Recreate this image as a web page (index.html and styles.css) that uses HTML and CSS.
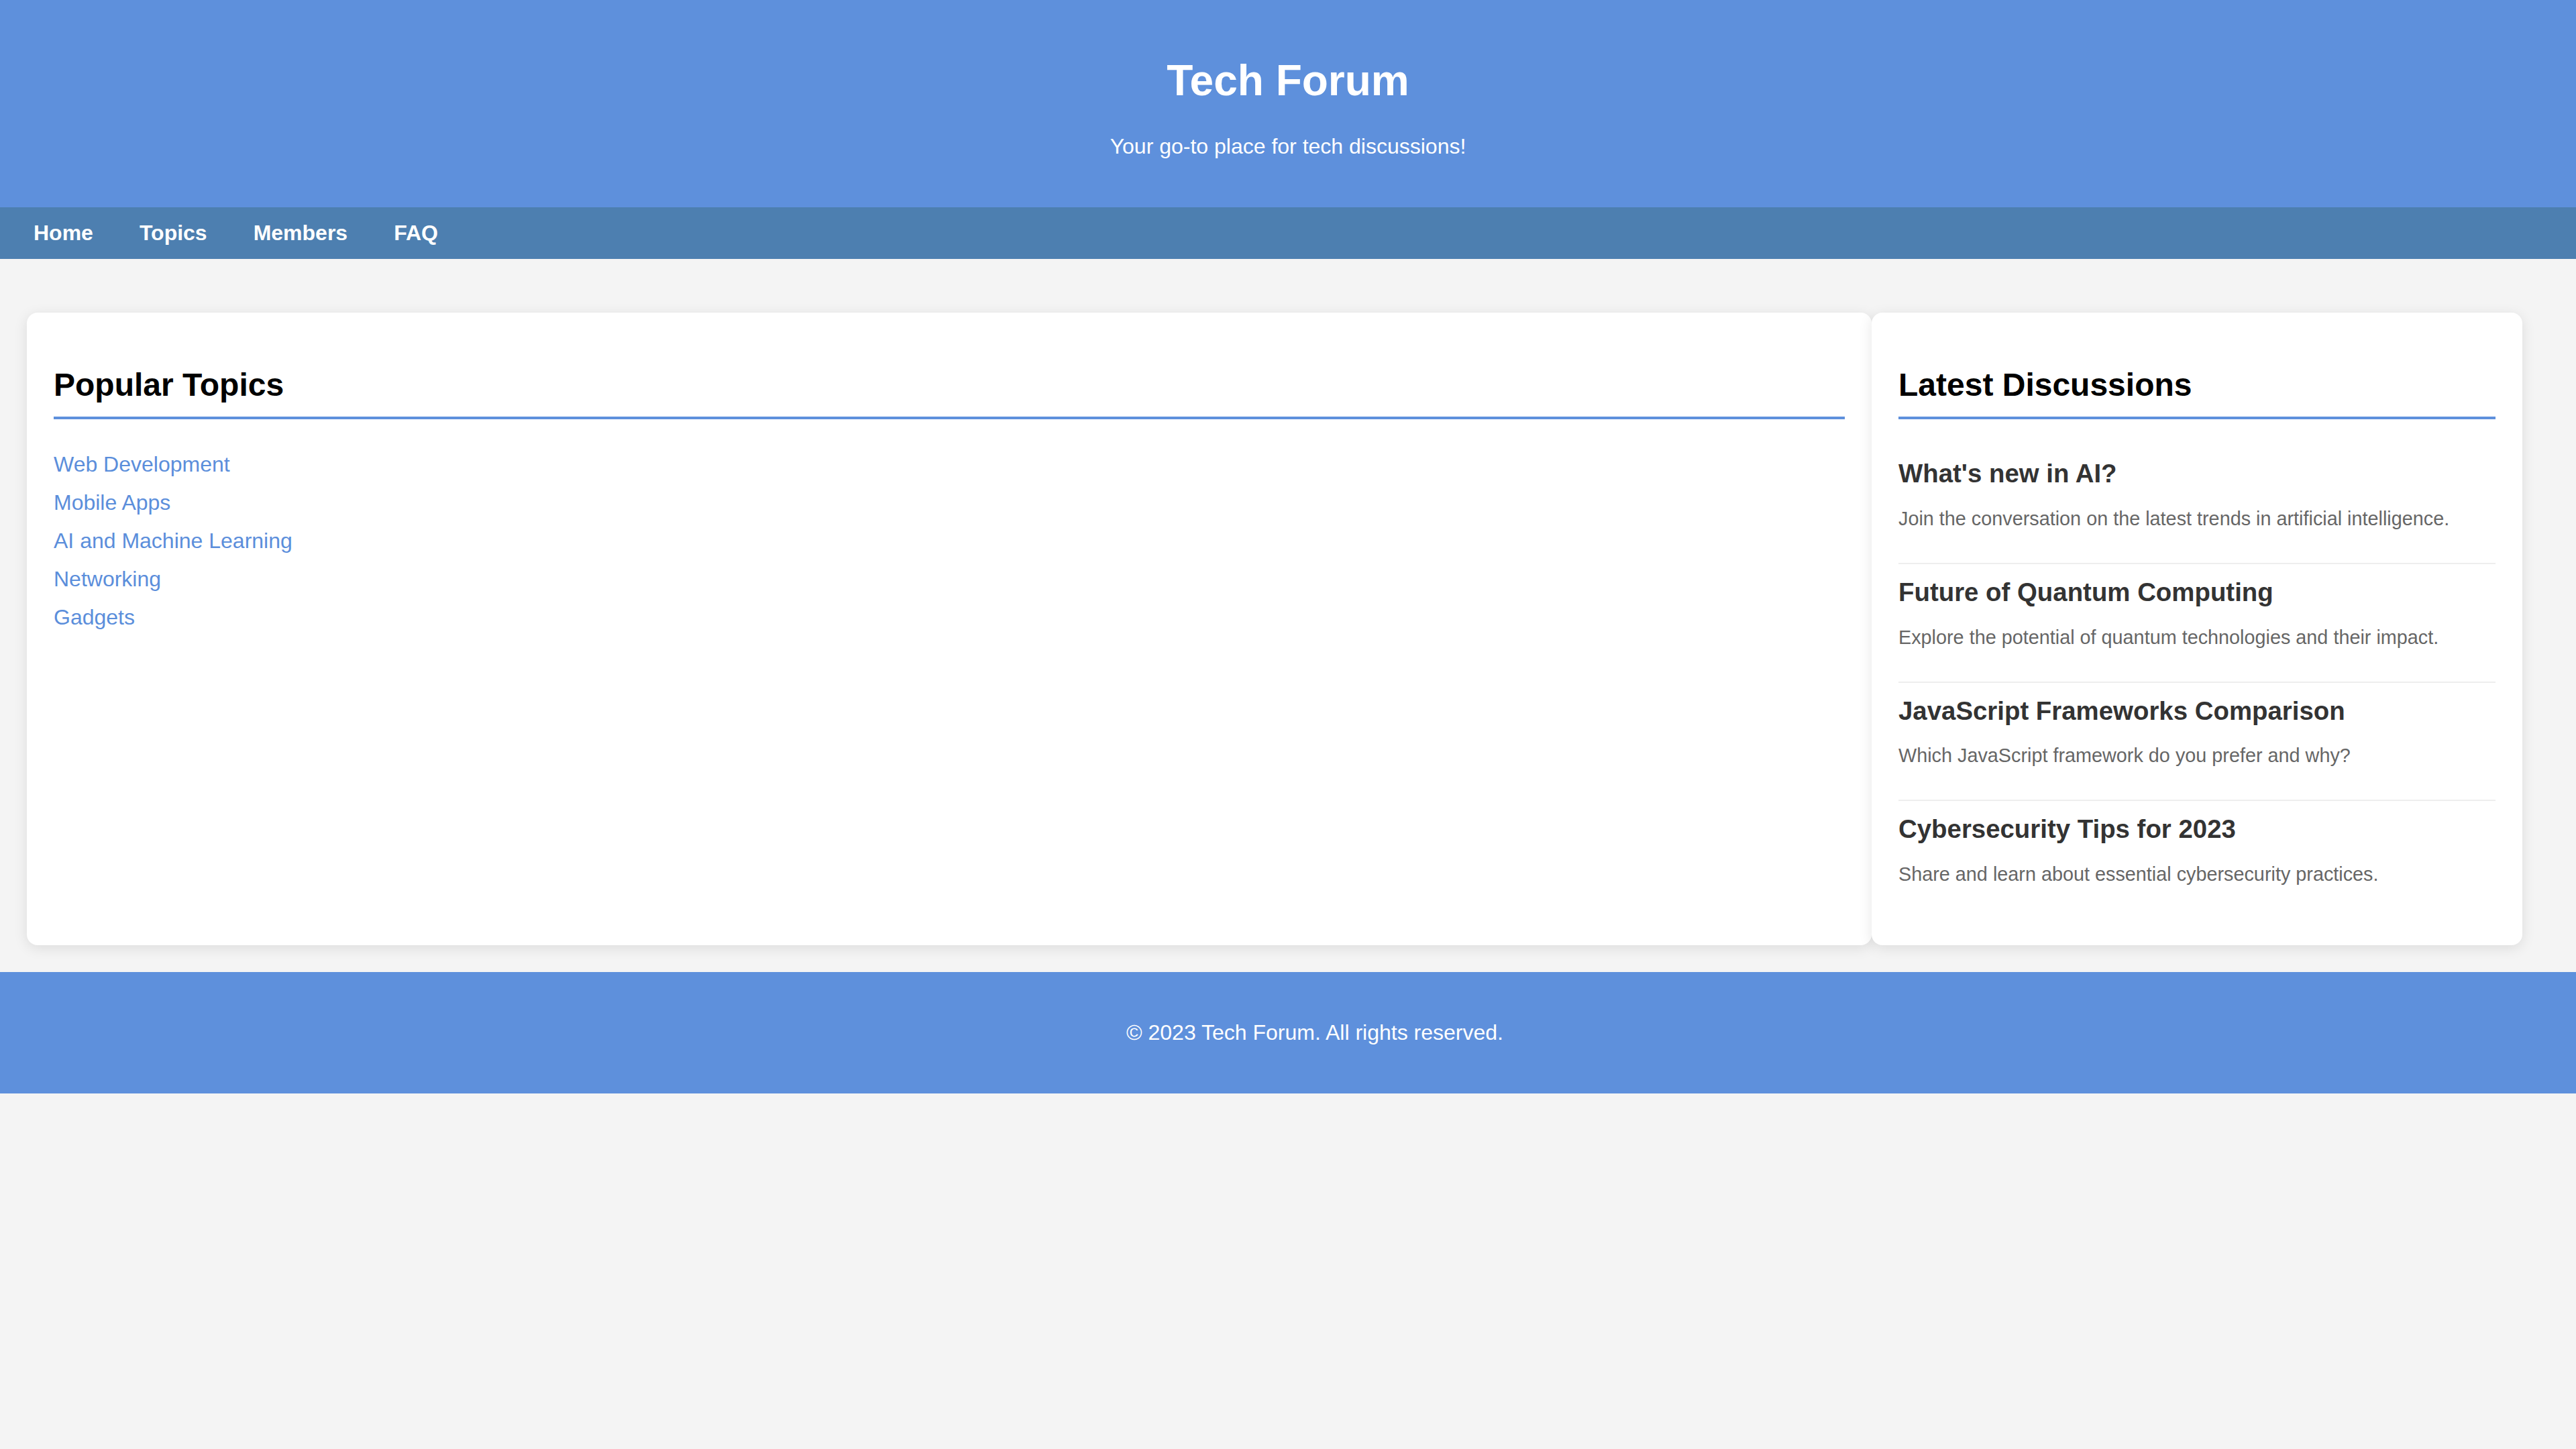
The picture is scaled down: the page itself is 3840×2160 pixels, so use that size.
FILE: index.html
```html
<!DOCTYPE html>
<html lang="en">
<head>
<meta charset="utf-8">
<title>Tech Forum</title>
<link rel="stylesheet" href="styles.css">
</head>
<body>
<header class="site-header">
  <h1 class="site-title">Tech Forum</h1>
  <p class="site-tagline">Your go-to place for tech discussions!</p>
</header>
<nav class="site-nav">
  <a class="nav-link" href="#">Home</a>
  <a class="nav-link" href="#">Topics</a>
  <a class="nav-link" href="#">Members</a>
  <a class="nav-link" href="#">FAQ</a>
</nav>
<main class="layout">
  <section class="card topics">
    <h2 class="card-title">Popular Topics</h2>
    <ul class="topic-list">
      <li class="topic-item"><a class="topic-link" href="#">Web Development</a></li>
      <li class="topic-item"><a class="topic-link" href="#">Mobile Apps</a></li>
      <li class="topic-item"><a class="topic-link" href="#">AI and Machine Learning</a></li>
      <li class="topic-item"><a class="topic-link" href="#">Networking</a></li>
      <li class="topic-item"><a class="topic-link" href="#">Gadgets</a></li>
    </ul>
  </section>
  <aside class="card sidebar">
    <h2 class="card-title">Latest Discussions</h2>
    <div class="discussion">
      <h3 class="discussion-title">What's new in AI?</h3>
      <p class="discussion-text">Join the conversation on the latest trends in artificial intelligence.</p>
    </div>
    <div class="discussion">
      <h3 class="discussion-title">Future of Quantum Computing</h3>
      <p class="discussion-text">Explore the potential of quantum technologies and their impact.</p>
    </div>
    <div class="discussion">
      <h3 class="discussion-title">JavaScript Frameworks Comparison</h3>
      <p class="discussion-text">Which JavaScript framework do you prefer and why?</p>
    </div>
    <div class="discussion">
      <h3 class="discussion-title">Cybersecurity Tips for 2023</h3>
      <p class="discussion-text">Share and learn about essential cybersecurity practices.</p>
    </div>
  </aside>
</main>
<footer class="site-footer">
  <p class="footer-text">&copy; 2023 Tech Forum. All rights reserved.</p>
</footer>
</body>
</html>
```

FILE: styles.css
```css
html, body {
  margin: 0;
  padding: 0;
}

body {
  font-family: "Liberation Sans", Arial, Helvetica, sans-serif;
  font-size: 32px;
  line-height: normal;
  background: #f4f4f4;
  color: #000;
}

.site-header {
  background: #5e90dc;
  color: #fff;
  text-align: center;
  padding: 40px;
}

.site-title {
  font-size: 64px;
  font-weight: bold;
  margin: 42.88px 0;
}

.site-tagline {
  margin: 32px 0;
}

.site-nav {
  background: #4d7fb0;
  display: flex;
  gap: 69px;
  padding: 20px 20px 20px 50px;
}

.nav-link {
  color: #fff;
  font-weight: bold;
  text-decoration: none;
}

.layout {
  display: flex;
  align-items: stretch;
  padding: 80px 80px 40px 40px;
}

.card {
  background: #fff;
  border-radius: 16px;
  padding: 40px;
  box-shadow: 0 4px 20px rgba(0, 0, 0, 0.1);
  min-width: 0;
}

.topics {
  flex: 3;
}

.sidebar {
  flex: 1;
}

.card-title {
  font-size: 48px;
  font-weight: bold;
  color: #000;
  margin: 39.84px 0;
  padding-bottom: 20px;
  border-bottom: 4px solid #5e90dc;
}

.topic-list {
  list-style: none;
  padding: 0;
  margin: 32px 0;
}

.topic-item {
  padding: 10px 0;
}

.topic-link {
  color: #5b8edb;
  text-decoration: none;
}

.discussion {
  padding: 20px 0;
  border-bottom: 2px solid #eeeeee;
}

.discussion:last-child {
  border-bottom: none;
}

.discussion-title {
  font-size: 38.4px;
  font-weight: bold;
  color: #333;
  margin: 0;
}

.discussion-text {
  font-size: 28.8px;
  color: #666;
  margin: 28.8px 0;
}

.site-footer {
  background: #5e90dc;
  color: #fff;
  text-align: center;
  padding: 40px 0 40px 80px;
}

.footer-text {
  margin: 32px 0;
}
```
